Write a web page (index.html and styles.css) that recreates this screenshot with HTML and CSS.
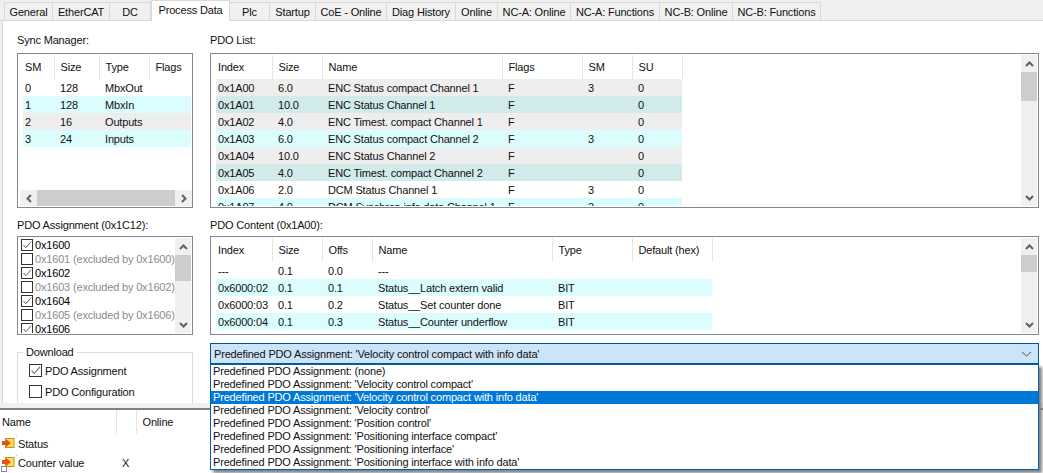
FILE: index.html
```html
<!DOCTYPE html>
<html lang="en">
<head>
    <meta charset="UTF-8">
    <meta name="viewport" content="width=device-width, initial-scale=1.0">
    <title>Process Data</title>
    <link rel="stylesheet" href="styles.css">
</head>
<body>
    <svg class="defs" width="0" height="0">
        <symbol id="tick" viewBox="0 0 11 11"><path d="M1.5 5.5 L4.2 8.5 L10 1.8" fill="none" stroke="#666" stroke-width="1.1"/></symbol>
        <symbol id="up" viewBox="0 0 9 6"><path d="M1 5 L4.5 1.5 L8 5" fill="none" stroke="#606060" stroke-width="2"/></symbol>
        <symbol id="down" viewBox="0 0 9 6"><path d="M1 1 L4.5 4.5 L8 1" fill="none" stroke="#606060" stroke-width="2"/></symbol>
        <symbol id="left" viewBox="0 0 6 9"><path d="M5 1 L1.5 4.5 L5 8" fill="none" stroke="#606060" stroke-width="2"/></symbol>
        <symbol id="right" viewBox="0 0 6 9"><path d="M1 1 L4.5 4.5 L1 8" fill="none" stroke="#606060" stroke-width="2"/></symbol>
        <symbol id="var" viewBox="0 0 16 12" overflow="visible">
            <rect x="4.5" y="0.5" width="8.5" height="9" fill="#ffe14d" stroke="#b8962a"/>
            <path d="M1 3 H5 V1 L10 5 L5 9 V7 H1 Z" fill="#e8501c"/>
            <rect x="15" y="-2" width="1" height="1" fill="#6fe6e6"/>
        </symbol>
    </svg>

    <div class="tabs">
        <div class="tab">General</div>
        <div class="tab">EtherCAT</div>
        <div class="tab">DC</div>
        <div class="tab active">Process Data</div>
        <div class="tab">Plc</div>
        <div class="tab">Startup</div>
        <div class="tab">CoE - Online</div>
        <div class="tab">Diag History</div>
        <div class="tab">Online</div>
        <div class="tab">NC-A: Online</div>
        <div class="tab">NC-A: Functions</div>
        <div class="tab">NC-B: Online</div>
        <div class="tab">NC-B: Functions</div>
    </div>

    <div class="panel">
        <div class="col-left">
            <div class="label">Sync Manager:</div>
            <div class="box box-top box-sync">
                <div class="grid-area">
                    <table class="sync">
                        <tr><th>SM</th><th>Size</th><th>Type</th><th>Flags</th></tr>
                        <tr><td>0</td><td>128</td><td>MbxOut</td><td></td></tr>
                        <tr class="cyan"><td>1</td><td>128</td><td>MbxIn</td><td></td></tr>
                        <tr class="grey"><td>2</td><td>16</td><td>Outputs</td><td></td></tr>
                        <tr class="cyan"><td>3</td><td>24</td><td>Inputs</td><td></td></tr>
                    </table>
                </div>
                <div class="hscroll">
                    <div class="sb-btn"><svg width="6" height="9"><use href="#left"/></svg></div>
                    <div class="thumb-h"></div>
                    <div class="sb-btn"><svg width="6" height="9"><use href="#right"/></svg></div>
                </div>
            </div>

            <div class="label next">PDO Assignment (0x1C12):</div>
            <div class="box box-mid">
                <div class="grid-area assign">
                    <div class="item"><span class="check"><svg width="10" height="10"><use href="#tick"/></svg></span>0x1600</div>
                    <div class="item off"><span class="check"></span>0x1601 (excluded by 0x1600)</div>
                    <div class="item"><span class="check"><svg width="10" height="10"><use href="#tick"/></svg></span>0x1602</div>
                    <div class="item off"><span class="check"></span>0x1603 (excluded by 0x1602)</div>
                    <div class="item"><span class="check"><svg width="10" height="10"><use href="#tick"/></svg></span>0x1604</div>
                    <div class="item off"><span class="check"></span>0x1605 (excluded by 0x1606)</div>
                    <div class="item"><span class="check"><svg width="10" height="10"><use href="#tick"/></svg></span>0x1606</div>
                </div>
                <div class="vscroll">
                    <div class="sb-btn"><svg width="9" height="6"><use href="#up"/></svg></div>
                    <div class="track"><div class="thumb thumb-assign"></div></div>
                    <div class="sb-btn"><svg width="9" height="6"><use href="#down"/></svg></div>
                </div>
            </div>

            <fieldset class="download">
                <legend>Download</legend>
                <div class="dl-row"><span class="check"><svg width="11" height="11"><use href="#tick"/></svg></span>PDO Assignment</div>
                <div class="dl-row"><span class="check"></span>PDO Configuration</div>
            </fieldset>
        </div>

        <div class="col-right">
            <div class="label">PDO List:</div>
            <div class="box box-top">
                <div class="grid-area">
                    <table class="pdo-list">
                        <tr><th>Index</th><th>Size</th><th>Name</th><th>Flags</th><th>SM</th><th>SU</th></tr>
                        <tr class="grey"><td>0x1A00</td><td>6.0</td><td>ENC Status compact Channel 1</td><td>F</td><td>3</td><td>0</td></tr>
                        <tr class="teal"><td>0x1A01</td><td>10.0</td><td>ENC Status Channel 1</td><td>F</td><td></td><td>0</td></tr>
                        <tr class="grey"><td>0x1A02</td><td>4.0</td><td>ENC Timest. compact Channel 1</td><td>F</td><td></td><td>0</td></tr>
                        <tr class="cyan"><td>0x1A03</td><td>6.0</td><td>ENC Status compact Channel 2</td><td>F</td><td>3</td><td>0</td></tr>
                        <tr class="grey"><td>0x1A04</td><td>10.0</td><td>ENC Status Channel 2</td><td>F</td><td></td><td>0</td></tr>
                        <tr class="teal"><td>0x1A05</td><td>4.0</td><td>ENC Timest. compact Channel 2</td><td>F</td><td></td><td>0</td></tr>
                        <tr><td>0x1A06</td><td>2.0</td><td>DCM Status Channel 1</td><td>F</td><td>3</td><td>0</td></tr>
                        <tr class="cyan"><td>0x1A07</td><td>4.0</td><td>DCM Synchron info data Channel 1</td><td>F</td><td>3</td><td>0</td></tr>
                    </table>
                </div>
                <div class="vscroll">
                    <div class="sb-btn"><svg width="9" height="6"><use href="#up"/></svg></div>
                    <div class="track"><div class="thumb thumb-list"></div></div>
                    <div class="sb-btn"><svg width="9" height="6"><use href="#down"/></svg></div>
                </div>
            </div>

            <div class="label next">PDO Content (0x1A00):</div>
            <div class="box box-mid">
                <div class="grid-area">
                    <table class="pdo-content">
                        <tr><th>Index</th><th>Size</th><th>Offs</th><th>Name</th><th>Type</th><th>Default (hex)</th></tr>
                        <tr><td>---</td><td>0.1</td><td>0.0</td><td>---</td><td></td><td></td></tr>
                        <tr class="cyan"><td>0x6000:02</td><td>0.1</td><td>0.1</td><td>Status__Latch extern valid</td><td>BIT</td><td></td></tr>
                        <tr><td>0x6000:03</td><td>0.1</td><td>0.2</td><td>Status__Set counter done</td><td>BIT</td><td></td></tr>
                        <tr class="cyan"><td>0x6000:04</td><td>0.1</td><td>0.3</td><td>Status__Counter underflow</td><td>BIT</td><td></td></tr>
                    </table>
                </div>
                <div class="vscroll">
                    <div class="sb-btn"><svg width="9" height="6"><use href="#up"/></svg></div>
                    <div class="track"><div class="thumb thumb-content"></div></div>
                    <div class="sb-btn"><svg width="9" height="6"><use href="#down"/></svg></div>
                </div>
            </div>

            <div class="combo">
                <span>Predefined PDO Assignment: 'Velocity control compact with info data'</span>
                <svg class="combo-arrow" width="11" height="6" viewBox="0 0 11 6"><path d="M1 1 L5.5 5 L10 1" fill="none" stroke="#555" stroke-width="1"/></svg>
                <div class="dropdown">
                    <div class="opt">Predefined PDO Assignment: (none)</div>
                    <div class="opt">Predefined PDO Assignment: 'Velocity control compact'</div>
                    <div class="opt selected">Predefined PDO Assignment: 'Velocity control compact with info data'</div>
                    <div class="opt">Predefined PDO Assignment: 'Velocity control'</div>
                    <div class="opt">Predefined PDO Assignment: 'Position control'</div>
                    <div class="opt">Predefined PDO Assignment: 'Positioning interface compact'</div>
                    <div class="opt">Predefined PDO Assignment: 'Positioning interface'</div>
                    <div class="opt">Predefined PDO Assignment: 'Positioning interface with info data'</div>
                </div>
            </div>
        </div>
    </div>

    <div class="splitter"></div>

    <div class="bottom">
        <table class="vars">
            <tr><th>Name</th><th></th><th>Online</th></tr>
            <tr><td><svg class="var-icon" width="16" height="12"><use href="#var"/></svg>Status</td><td></td><td></td></tr>
            <tr><td class="linked"><svg class="var-icon" width="16" height="12"><use href="#var"/></svg><span class="link-mark"></span>Counter value</td><td>X</td><td></td></tr>
        </table>
    </div>
</body>
</html>
```

FILE: styles.css
```css
* {
    box-sizing: border-box;
}

html, body {
    margin: 0;
    height: 473px;
    overflow: hidden;
}

body {
    font-family: "Liberation Sans", Arial, sans-serif;
    font-size: 11px;
    letter-spacing: -0.17px;
    color: #111;
    background-color: #f0f0f0;
}

.defs {
    position: absolute;
}

/* tab strip */
.tabs {
    display: grid;
    grid-template-columns: 49px 57px 41px 79px 40px 46px 71px 69px 42px 73px 89px 73px 88px 1fr;
    height: 21px;
    padding: 2px 0 0 4px;
    border-bottom: 1px solid #d9d9d9;
}

.tab {
    height: 19px;
    line-height: 19px;
    text-align: center;
    white-space: nowrap;
    border: 1px solid #d9d9d9;
    border-left: none;
}

.tab:first-child {
    border-left: 1px solid #d9d9d9;
}

.tab.active {
    height: 21px;
    margin-top: -2px;
    line-height: 18px;
    background-color: #fff;
    border-bottom: none;
    border-left: 1px solid #d9d9d9;
}

/* main panel */
.panel {
    display: grid;
    grid-template-columns: 176px 829px;
    column-gap: 17px;
    height: 382px;
    padding: 12px 0 0 14px;
    margin-left: 2px;
    background-color: #fff;
    border-left: 1px solid #d9d9d9;
}

.col-left {
    height: 370px;
    overflow: hidden;
}

.label {
    height: 14px;
    margin-bottom: 6px;
    line-height: 14px;
}

.label.next {
    margin-top: 10px;
    margin-bottom: 4px;
}

.box {
    display: flex;
    padding: 1px;
    background-color: #fff;
    border: 1px solid #828790;
}

.box-top {
    height: 155px;
}

.box-mid {
    height: 99px;
}

.box-sync {
    flex-direction: column;
}

.grid-area {
    flex: 1;
    min-width: 0;
    min-height: 0;
    overflow: hidden;
}

/* tables */
table {
    border-collapse: collapse;
    table-layout: fixed;
}

.sync, .pdo-list, .pdo-content {
    margin-left: 4px;
}

.sync {
    width: 168px;
}

.pdo-list {
    width: 466px;
}

.pdo-content {
    width: 496px;
}

th {
    height: 24px;
    padding: 0 0 0 6px;
    font-weight: normal;
    text-align: left;
    white-space: nowrap;
    border-right: 1px solid #e5e5e5;
}

td {
    height: 17px;
    padding: 0 0 0 6px;
    white-space: nowrap;
    overflow: hidden;
}

th:first-child, td:first-child {
    padding-left: 2px;
}

.sync th:nth-child(1) { width: 31px; }
.sync th:nth-child(2) { width: 45px; }
.sync th:nth-child(3) { width: 50px; }
.sync th:nth-child(4) { width: 42px; border-right: none; }

.pdo-list th:nth-child(1) { width: 56px; }
.pdo-list th:nth-child(2) { width: 50px; }
.pdo-list th:nth-child(3) { width: 180px; }
.pdo-list th:nth-child(4) { width: 80px; }
.pdo-list th:nth-child(5) { width: 50px; }
.pdo-list th:nth-child(6) { width: 50px; }

.pdo-content th:nth-child(1) { width: 56px; }
.pdo-content th:nth-child(2) { width: 50px; }
.pdo-content th:nth-child(3) { width: 50px; }
.pdo-content th:nth-child(4) { width: 180px; }
.pdo-content th:nth-child(5) { width: 80px; }
.pdo-content th:nth-child(6) { width: 80px; }

.grey {
    background-color: #eeeeee;
}

.cyan {
    background-color: #dcfdfd;
}

.teal {
    background-color: #d2eaea;
}

/* scrollbars */
.vscroll {
    display: flex;
    flex-direction: column;
    flex: none;
    width: 16px;
    background-color: #f0f0f0;
}

.hscroll {
    display: flex;
    flex: none;
    height: 16px;
    margin: 0 0 0 1px;
    width: 172px;
    background-color: #f0f0f0;
}

.sb-btn {
    display: flex;
    flex: none;
    align-items: center;
    justify-content: center;
    width: 17px;
    height: 17px;
}

.vscroll .sb-btn {
    width: 16px;
}

.hscroll .sb-btn {
    height: 16px;
}

.track {
    flex: 1;
}

.thumb {
    background-color: #cdcdcd;
}

.thumb-h {
    flex: 1;
    background-color: #cdcdcd;
}

.thumb-list {
    height: 29px;
}

.thumb-content {
    height: 17px;
}

.thumb-assign {
    height: 26px;
}

/* assignment list */
.assign {
    padding-left: 2px;
}

.item {
    display: flex;
    align-items: center;
    height: 14px;
    line-height: 14px;
    white-space: nowrap;
    color: #000;
}

.item.off {
    color: #8c8c8c;
}

.check {
    display: flex;
    flex: none;
    align-items: center;
    justify-content: center;
    width: 13px;
    height: 13px;
    margin-right: 2px;
    background-color: #fff;
    border: 1px solid #333;
}

.item .check {
    width: 12px;
    height: 12px;
}

/* download group */
.download {
    height: 80px;
    margin: 10px 0 0;
    padding: 1px 0 0 11px;
    border: 1px solid #dcdcdc;
}

.download legend {
    height: 14px;
    margin-left: -6px;
    padding: 0 3px;
    line-height: 14px;
}

.dl-row {
    display: flex;
    align-items: center;
    height: 21px;
}

.dl-row .check {
    margin-right: 3px;
}

/* combo and open list */
.combo {
    position: relative;
    z-index: 10;
    display: flex;
    align-items: center;
    justify-content: space-between;
    height: 21px;
    margin-top: 8px;
    padding: 0 4px 0 3px;
    white-space: nowrap;
    background-color: #cce4f7;
    border: 1px solid #005499;
}

.combo-arrow {
    margin-right: 2px;
}

.dropdown {
    position: absolute;
    top: 20px;
    left: -1px;
    width: 829px;
    background-color: #fff;
    border: 1px solid #0560b0;
    box-shadow: 3px 3px 3px #808080;
}

.opt {
    height: 13px;
    padding-left: 2px;
    line-height: 13px;
}

.opt.selected {
    color: #fff;
    background-color: #0078d7;
}

/* bottom pane */
.splitter {
    height: 7px;
    border-bottom: 2px solid #808080;
}

.bottom {
    height: 63px;
    background-color: #fff;
}

.vars th {
    height: 24px;
}

.vars td {
    height: 19px;
    overflow: visible;
}

.vars th:nth-child(1) { width: 116px; }
.vars th:nth-child(2) { width: 20px; }
.vars th:nth-child(3) { width: 100px; border-right: none; }

.var-icon {
    margin: 0 0 0 -1px;
    margin-right: 1px;
    vertical-align: -2px;
    overflow: visible;
}

.linked {
    position: relative;
}

/* small shortcut mark over the icon */
.link-mark {
    position: absolute;
    left: 1px;
    bottom: 0;
    width: 6px;
    height: 6px;
    background-color: #fff;
    border: 1px solid #888;
}
```
